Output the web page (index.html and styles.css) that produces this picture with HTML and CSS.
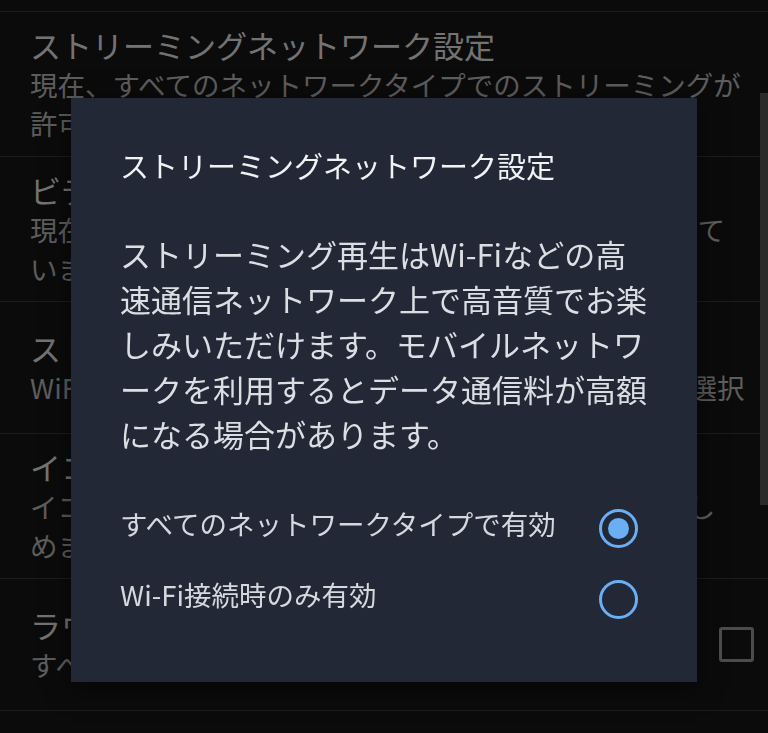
FILE: index.html
```html
<!DOCTYPE html>
<html lang="ja">
<head>
  <meta charset="UTF-8" />
  <meta name="viewport" content="width=device-width, initial-scale=1.0"/>
  <title>ストリーミングネットワーク設定</title>
  <link rel="stylesheet" href="styles.css">
</head>

<body>
  <!-- SETTINGS LIST (di belakang dialog) -->
  <div class="settings">
    <div class="list-edge"></div>

    <div class="row">
      <div class="row-text">
        <p class="row-title">ストリーミングネットワーク設定</p>
        <p class="row-sub">現在、すべてのネットワークタイプでのストリーミングが<br>許可されています。</p>
      </div>
    </div>

    <div class="row">
      <div class="row-text">
        <p class="row-title">ビデオストリーミング設定</p>
        <p class="row-sub">現在、すべてのネットワークでHD動画の再生を許可して<br>います。</p>
      </div>
    </div>

    <div class="row">
      <div class="row-text">
        <p class="row-title">ストリーミング音質</p>
        <p class="row-sub">WiFi接続時とモバイルネットワーク接続時の各音質を選択</p>
      </div>
    </div>

    <div class="row">
      <div class="row-text">
        <p class="row-title">イコライザー</p>
        <p class="row-sub">イコライザーを使用して、お好みの音質で音楽をお楽し<br>めます。</p>
      </div>
    </div>

    <div class="row">
      <div class="row-text">
        <p class="row-title">ラウドネスノーマライズ</p>
        <p class="row-sub">すべての曲を同じ音量で再生します</p>
      </div>
      <span class="checkbox"></span>
    </div>

    <div class="row row-empty"></div>

    <div class="scrollbar"></div>
  </div>

  <!-- SCRIM + DIALOG -->
  <div class="scrim"></div>

  <div class="dialog" role="dialog">
    <h2 class="dialog-title">ストリーミングネットワーク設定</h2>
    <p class="dialog-body">ストリーミング再生はWi-Fiなどの高速通信ネットワーク上で高音質でお楽しみいただけます。モバイルネットワークを利用するとデータ通信料が高額になる場合があります。</p>

    <div class="options">
      <label class="option">
        <span class="option-label">すべてのネットワークタイプで有効</span>
        <span class="radio checked"></span>
      </label>
      <label class="option">
        <span class="option-label">Wi-Fi接続時のみ有効</span>
        <span class="radio"></span>
      </label>
    </div>
  </div>
</body>
</html>
```

FILE: styles.css
```css
/* ===== Reset & Font ===== */
* {
  margin: 0;
  padding: 0;
  box-sizing: border-box;
  font-family: "Noto Sans CJK JP", "Noto Sans", sans-serif;
}
html, body {
  width: 100%;
  height: 100%;
  overflow: hidden;
}
body {
  background: #141414;
  position: relative;
}

/* ===== Settings list ===== */
.settings {
  position: relative;
}
.list-edge {
  height: 12px;
  border-bottom: 1px solid #333;
}
.row {
  display: flex;
  align-items: center;
  min-height: 132px;
  padding: 13px 20px 13px 30px;
  border-bottom: 1px solid #333;
}
.row-text {
  flex: 1;
}
.row-title {
  font-size: 31px;
  line-height: 40px;
  color: #d2d2d2;
  white-space: nowrap;
}
.row-sub {
  font-size: 27.5px;
  line-height: 39px;
  color: #a9a9a9;
  white-space: nowrap;
}
.checkbox {
  width: 35px;
  height: 35px;
  margin-right: -6px;
  border: 3px solid #8a8a8a;
  border-radius: 3px;
  flex-shrink: 0;
}
.scrollbar {
  position: absolute;
  top: 93px;
  right: 0;
  width: 8px;
  height: 412px;
  background: #4e4e4e;
}

/* ===== Scrim ===== */
.scrim {
  position: fixed;
  inset: 0;
  background: rgba(0,0,0,0.45);
}

/* ===== Dialog ===== */
.dialog {
  position: absolute;
  left: 71px;
  top: 98px;
  width: 626px;
  height: 584px;
  padding: 49px 47px 0 49px;
  background: #232837;
  box-shadow: 0 6px 24px rgba(0,0,0,0.5);
}
.dialog-title {
  font-size: 29px;
  font-weight: 400;
  line-height: 36px;
  color: #f1f2f4;
  white-space: nowrap;
}
.dialog-body {
  margin-top: 48px;
  font-size: 31px;
  line-height: 45px;
  color: #dcdee3;
  line-break: loose;
}
.options {
  margin-top: 37px;
}
.option {
  display: flex;
  align-items: center;
  justify-content: space-between;
  height: 71px;
  cursor: pointer;
}
.option-label {
  font-size: 27.5px;
  line-height: 36px;
  color: #d6d8de;
  padding-bottom: 11px;
  white-space: nowrap;
}
.radio {
  position: relative;
  width: 39px;
  height: 39px;
  margin-right: 12px;
  border: 3.5px solid #6aaef4;
  border-radius: 50%;
  flex-shrink: 0;
}
.radio.checked::after {
  content: "";
  position: absolute;
  inset: 6px;
  border-radius: 50%;
  background: #6aaef4;
}
```
